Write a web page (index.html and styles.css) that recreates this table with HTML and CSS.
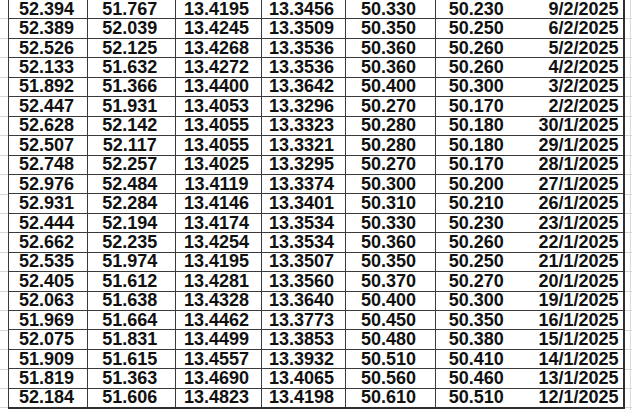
FILE: index.html
```html
<!DOCTYPE html>
<html>
<head>
<meta charset="utf-8">
<link rel="stylesheet" href="styles.css">
</head>
<body>
<div class="sheet">
<table class="rates">
<colgroup>
<col class="c1"><col class="c2"><col class="c3"><col class="c4"><col class="c5"><col class="c6"><col class="c7">
</colgroup>
<tbody>
<tr><td>52.394</td><td>51.767</td><td>13.4195</td><td>13.3456</td><td>50.330</td><td>50.230</td><td class="date">9/2/2025</td></tr>
<tr><td>52.389</td><td>52.039</td><td>13.4245</td><td>13.3509</td><td>50.350</td><td>50.250</td><td class="date">6/2/2025</td></tr>
<tr><td>52.526</td><td>52.125</td><td>13.4268</td><td>13.3536</td><td>50.360</td><td>50.260</td><td class="date">5/2/2025</td></tr>
<tr><td>52.133</td><td>51.632</td><td>13.4272</td><td>13.3536</td><td>50.360</td><td>50.260</td><td class="date">4/2/2025</td></tr>
<tr><td>51.892</td><td>51.366</td><td>13.4400</td><td>13.3642</td><td>50.400</td><td>50.300</td><td class="date">3/2/2025</td></tr>
<tr><td>52.447</td><td>51.931</td><td>13.4053</td><td>13.3296</td><td>50.270</td><td>50.170</td><td class="date">2/2/2025</td></tr>
<tr><td>52.628</td><td>52.142</td><td>13.4055</td><td>13.3323</td><td>50.280</td><td>50.180</td><td class="date">30/1/2025</td></tr>
<tr><td>52.507</td><td>52.117</td><td>13.4055</td><td>13.3321</td><td>50.280</td><td>50.180</td><td class="date">29/1/2025</td></tr>
<tr><td>52.748</td><td>52.257</td><td>13.4025</td><td>13.3295</td><td>50.270</td><td>50.170</td><td class="date">28/1/2025</td></tr>
<tr><td>52.976</td><td>52.484</td><td>13.4119</td><td>13.3374</td><td>50.300</td><td>50.200</td><td class="date">27/1/2025</td></tr>
<tr><td>52.931</td><td>52.284</td><td>13.4146</td><td>13.3401</td><td>50.310</td><td>50.210</td><td class="date">26/1/2025</td></tr>
<tr><td>52.444</td><td>52.194</td><td>13.4174</td><td>13.3534</td><td>50.330</td><td>50.230</td><td class="date">23/1/2025</td></tr>
<tr><td>52.662</td><td>52.235</td><td>13.4254</td><td>13.3534</td><td>50.360</td><td>50.260</td><td class="date">22/1/2025</td></tr>
<tr><td>52.535</td><td>51.974</td><td>13.4195</td><td>13.3507</td><td>50.350</td><td>50.250</td><td class="date">21/1/2025</td></tr>
<tr><td>52.405</td><td>51.612</td><td>13.4281</td><td>13.3560</td><td>50.370</td><td>50.270</td><td class="date">20/1/2025</td></tr>
<tr><td>52.063</td><td>51.638</td><td>13.4328</td><td>13.3640</td><td>50.400</td><td>50.300</td><td class="date">19/1/2025</td></tr>
<tr><td>51.969</td><td>51.664</td><td>13.4462</td><td>13.3773</td><td>50.450</td><td>50.350</td><td class="date">16/1/2025</td></tr>
<tr><td>52.075</td><td>51.831</td><td>13.4499</td><td>13.3853</td><td>50.480</td><td>50.380</td><td class="date">15/1/2025</td></tr>
<tr><td>51.909</td><td>51.615</td><td>13.4557</td><td>13.3932</td><td>50.510</td><td>50.410</td><td class="date">14/1/2025</td></tr>
<tr><td>51.819</td><td>51.363</td><td>13.4690</td><td>13.4065</td><td>50.560</td><td>50.460</td><td class="date">13/1/2025</td></tr>
<tr><td>52.184</td><td>51.606</td><td>13.4823</td><td>13.4198</td><td>50.610</td><td>50.510</td><td class="date">12/1/2025</td></tr>
</tbody>
</table>
</div>
</body>
</html>
```
FILE: styles.css
```css
html, body {
  margin: 0;
  padding: 0;
  width: 632px;
  height: 410px;
  overflow: hidden;
}
body {
  background-color: #ffffff;
  background-image:
    linear-gradient(to right, transparent 630px, #dcdcdc 630px, #dcdcdc 631px, transparent 631px),
    repeating-linear-gradient(to bottom, transparent 0, transparent 18.45px, #d6d6d6 18.45px, #d6d6d6 19.45px);
  background-position: 0 0, 0 0;
  font-family: "Liberation Sans", Arial, sans-serif;
}
.sheet {
  padding-left: 8px;
  margin-top: -1px;
}
.rates {
  border-collapse: collapse;
  table-layout: fixed;
  width: 615px;
  background: #ffffff;
  border-right: 2px solid #2e2e2e;
  border-bottom: 2px solid #2e2e2e;
}
.c1 { width: 79px; }
.c2 { width: 87.5px; }
.c3 { width: 86px; }
.c4 { width: 84px; }
.c5 { width: 90px; }
.c6 { width: 85px; }
.c7 { width: 103.5px; }
.rates tr {
  height: 19.45px;
}
.rates td {
  border: 1px solid #3a3a3a;
  padding: 0 3px 0 0;
  height: 17.45px;
  line-height: 17px;
  font-size: 18px;
  font-weight: bold;
  color: #111111;
  text-align: center;
  white-space: nowrap;
  overflow: hidden;
}
.rates td.date {
  border-left: none;
  text-align: right;
  padding-right: 4px;
}
.rates td:nth-child(6) {
  border-right: none;
}
```
